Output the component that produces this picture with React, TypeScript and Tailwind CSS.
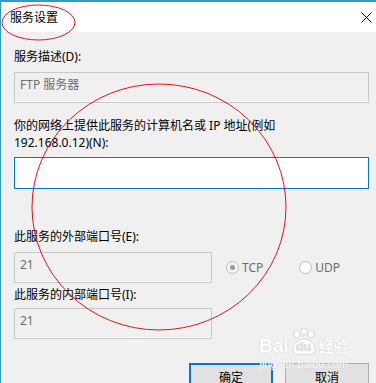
export default function App() {
  const font = "font-['Segoe_UI','Noto_Sans','Noto_Sans_CJK_SC',sans-serif]";
  return (
    <div className={`relative w-[376px] h-[383px] overflow-hidden bg-[#f0f0f0] border-l border-t-2 border-[#2e9cc9] text-[12px] text-black ${font}`}>
      {/* title bar */}
      <div className="flex h-[30px] items-center justify-between bg-white pl-[9px] pr-[4px]">
        <span className="text-[12px] leading-[17px]">服务设置</span>
        <svg width="11" height="11" viewBox="0 0 11 11" className="mr-[0px]">
          <path d="M0.5 0.5L10.5 10.5M10.5 0.5L0.5 10.5" stroke="#000" strokeWidth="1" />
        </svg>
      </div>

      <div className="flex flex-col pl-[13px] pr-[7px]">
        <div className="mt-[16px] leading-[17px]">服务描述(D):</div>
        <div className="mt-[7px] h-[31px] w-[355px] border border-[#c9c9c9] bg-[#f0f0f0] px-[5px] pt-[3px] leading-[17px] text-[#6d6d6d] shadow-[inset_0_-1px_0_#fff]">
          FTP 服务器
        </div>

        <div className="mt-[14px] leading-[17px]">
          你的网络上提供此服务的计算机名或 IP 地址(例如
          <br />
          192.168.0.12)(N):
        </div>
        <div className="mt-[6px] h-[32px] w-[355px] border border-[#0078d7] bg-white" />

        <div className="mt-[39px] leading-[17px]">此服务的外部端口号(E):</div>
        <div className="mt-[7px] flex items-center">
          <div className="h-[31px] w-[198px] border border-[#c9c9c9] px-[5px] pt-[3px] leading-[17px] text-[#6d6d6d] shadow-[inset_0_-1px_0_#fff]">
            21
          </div>
          <div className="ml-[14px] flex items-center gap-[3px] text-[#6d6d6d]">
            <span className="flex h-[13px] w-[13px] items-center justify-center rounded-full border border-[#bcbcbc] bg-[#f4f4f4]">
              <span className="h-[5px] w-[5px] rounded-full bg-[#9a9a9a]" />
            </span>
            <span>TCP</span>
          </div>
          <div className="ml-[36px] flex items-center gap-[3px] text-[#6d6d6d]">
            <span className="h-[13px] w-[13px] rounded-full border border-[#bcbcbc] bg-white" />
            <span>UDP</span>
          </div>
        </div>

        <div className="mt-[3px] leading-[17px]">此服务的内部端口号(I):</div>
        <div className="mt-[5px] h-[31px] w-[198px] border border-[#c9c9c9] px-[5px] pt-[3px] leading-[17px] text-[#6d6d6d] shadow-[inset_0_-1px_0_#fff]">
          21
        </div>

        <div className="mt-[24px] flex justify-end gap-[12px] pr-[0px]">
          <button className="h-[28px] w-[84px] border-2 border-[#0078d7] bg-[#e1e1e1] text-[12px] leading-[17px]">确定</button>
          <button className="h-[28px] w-[84px] border border-[#adadad] bg-[#e1e1e1] text-[12px] leading-[17px]">取消</button>
        </div>
      </div>

      {/* watermark */}
      <div className="pointer-events-none absolute left-[258px] top-[326px] flex flex-col items-center text-white [text-shadow:0_0_1px_#b5b5b5]">
        <div className="flex items-end gap-[1px]">
          <span className="font-['Liberation_Sans'] text-[19px] font-bold leading-[20px]">Bai</span>
          <span className="relative flex h-[28px] w-[28px] items-end justify-center">
            <svg width="28" height="28" viewBox="0 0 28 28" className="absolute inset-0">
              <g fill="#fff" stroke="#c4c4c4" strokeWidth="0.6">
                <ellipse cx="7" cy="6" rx="3" ry="3.5" />
                <ellipse cx="14" cy="3.5" rx="3" ry="3.3" />
                <ellipse cx="21" cy="6" rx="3" ry="3.5" />
                <path d="M3 22C3 15 9 11 14 11C19 11 25 15 25 22C25 27 19 27 14 26C9 27 3 27 3 22Z" />
              </g>
            </svg>
            <span className="relative mb-[3px] font-['Liberation_Sans'] text-[13px] font-bold leading-[13px] text-[#e6e6e6]">du</span>
          </span>
          <span className="text-[15px] font-bold leading-[20px]">经验</span>
        </div>
        <span className="mt-[3px] font-['Liberation_Sans'] text-[11px] leading-[11px]">jingyan.baidu.com</span>
      </div>

      {/* red annotations */}
      <svg className="pointer-events-none absolute left-[-1px] top-[-2px]" width="376" height="383">
        <ellipse cx="38.5" cy="22.5" rx="36.5" ry="17.5" fill="none" stroke="#e3141b" strokeWidth="1" />
        <ellipse cx="159" cy="207" rx="127" ry="123" fill="none" stroke="#e3141b" strokeWidth="1" />
      </svg>
    </div>
  );
}
